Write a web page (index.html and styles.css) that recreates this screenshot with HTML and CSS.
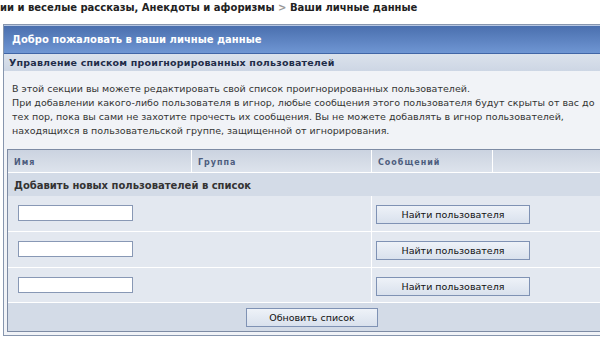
FILE: index.html
```html
<!doctype html>
<html>
<head>
    <title>Ваши личные данные</title>
    <link rel="stylesheet" href="styles.css">
</head>
<body>
    <div class="crumbs">ии и веселые рассказы, Анекдоты и афоризмы <span class="sep">&gt;</span> Ваши личные данные</div>

    <div class="box">
        <div class="box-head">Добро пожаловать в ваши личные данные</div>
        <div class="sub">Управление списком проигнорированных пользователей</div>
        <div class="desc">
            В этой секции вы можете редактировать свой список проигнорированных пользователей.<br>
            При добавлении какого-либо пользователя в игнор, любые сообщения этого пользователя будут скрыты от вас до
            тех пор, пока вы сами не захотите прочесть их сообщения. Вы не можете добавлять в игнор пользователей,
            находящихся в пользовательской группе, защищенной от игнорирования.
        </div>

        <div class="list">
            <div class="cols">
                <div class="col">Имя</div>
                <div class="col">Группа</div>
                <div class="col">Сообщений</div>
                <div class="col"></div>
            </div>
            <div class="add">Добавить новых пользователей в список</div>
            <div class="row">
                <div class="cell"><input class="field" type="text"></div>
                <div class="cell"><button class="btn find">Найти пользователя</button></div>
            </div>
            <div class="row">
                <div class="cell"><input class="field" type="text"></div>
                <div class="cell"><button class="btn find">Найти пользователя</button></div>
            </div>
            <div class="row">
                <div class="cell"><input class="field" type="text"></div>
                <div class="cell"><button class="btn find">Найти пользователя</button></div>
            </div>
            <div class="foot">
                <button class="btn update">Обновить список</button>
            </div>
        </div>
    </div>
</body>
</html>
```

FILE: styles.css
```css
* {
    margin: 0;
    padding: 0;
    box-sizing: border-box;
}

body {
    width: 600px;
    height: 357px;
    overflow: hidden;
    background: #fff;
    font-family: "DejaVu Sans", Verdana, sans-serif;
    color: #222;
}

.crumbs {
    height: 24px;
    padding-top: 2px;
    font-size: 10px;
    font-weight: bold;
    white-space: nowrap;
    color: #222;
}

.crumbs .sep {
    color: #999;
}

.box {
    margin-left: 3px;
    width: 618px;
    border: 1px solid #8796ae;
    background: #f1f3f7;
}

.box-head {
    height: 29px;
    display: flex;
    align-items: center;
    padding-left: 8px;
    background: linear-gradient(#4a6fae, #6f96d3);
    border-top: 1px solid #b7c7e2;
    border-bottom: 1px solid #4166a6;
    color: #fff;
    font-size: 10px;
    font-weight: bold;
}

.sub {
    height: 17px;
    display: flex;
    align-items: center;
    padding-left: 5px;
    background: linear-gradient(#dbe2ec, #cdd6e4);
    color: #1f2c48;
    font-size: 9.5px;
    font-weight: bold;
    letter-spacing: 0.2px;
}

.desc {
    padding: 11px 8px 11px 8px;
    line-height: 14px;
    font-size: 9.5px;
    color: #333;
}

.list {
    margin: 0 3px 3px 3px;
    border: 1px solid #7d8ba4;
    background: #e3e8f0;
}

.cols {
    display: grid;
    grid-template-columns: 184px 180px 121px 1fr;
    height: 23px;
    border-bottom: 1px solid #fff;
    background: linear-gradient(#cbd3e0, #dde3ec);
}

.col {
    display: flex;
    align-items: center;
    padding: 2px 0 0 6px;
    border-right: 1px solid #fff;
    color: #4d5d7e;
    font-size: 8px;
    font-weight: bold;
    letter-spacing: 1px;
}

.add {
    height: 23px;
    display: flex;
    align-items: center;
    padding: 2px 0 0 6px;
    background: #d3dbe7;
    color: #333;
    font-size: 10px;
    font-weight: bold;
}

.row {
    display: grid;
    grid-template-columns: 364px 1fr;
    height: 36px;
    border-bottom: 1px solid #fff;
}

.row:nth-child(5) {
    height: 35px;
}

.row:nth-child(6) {
    border-bottom: 1px solid #9aa8c0;
}

.cell {
    padding: 9px 0 0 10px;
    border-right: 1px solid #fff;
}

.cell:last-child {
    padding-left: 4px;
    border-right: 0;
}

.field {
    display: block;
    width: 115px;
    height: 16px;
    background: #fff;
    border: 1px solid #8898b5;
}

.btn {
    display: block;
    height: 19px;
    border: 1px solid #7f92b4;
    background: linear-gradient(#eef2f8, #d9e1ed);
    color: #111;
    font-family: "DejaVu Sans", Verdana, sans-serif;
    font-size: 9.5px;
}

.find {
    width: 154px;
}

.foot {
    height: 28px;
    display: flex;
    justify-content: center;
    align-items: center;
    background: #d3dbe7;
}

.update {
    width: 132px;
}
```
